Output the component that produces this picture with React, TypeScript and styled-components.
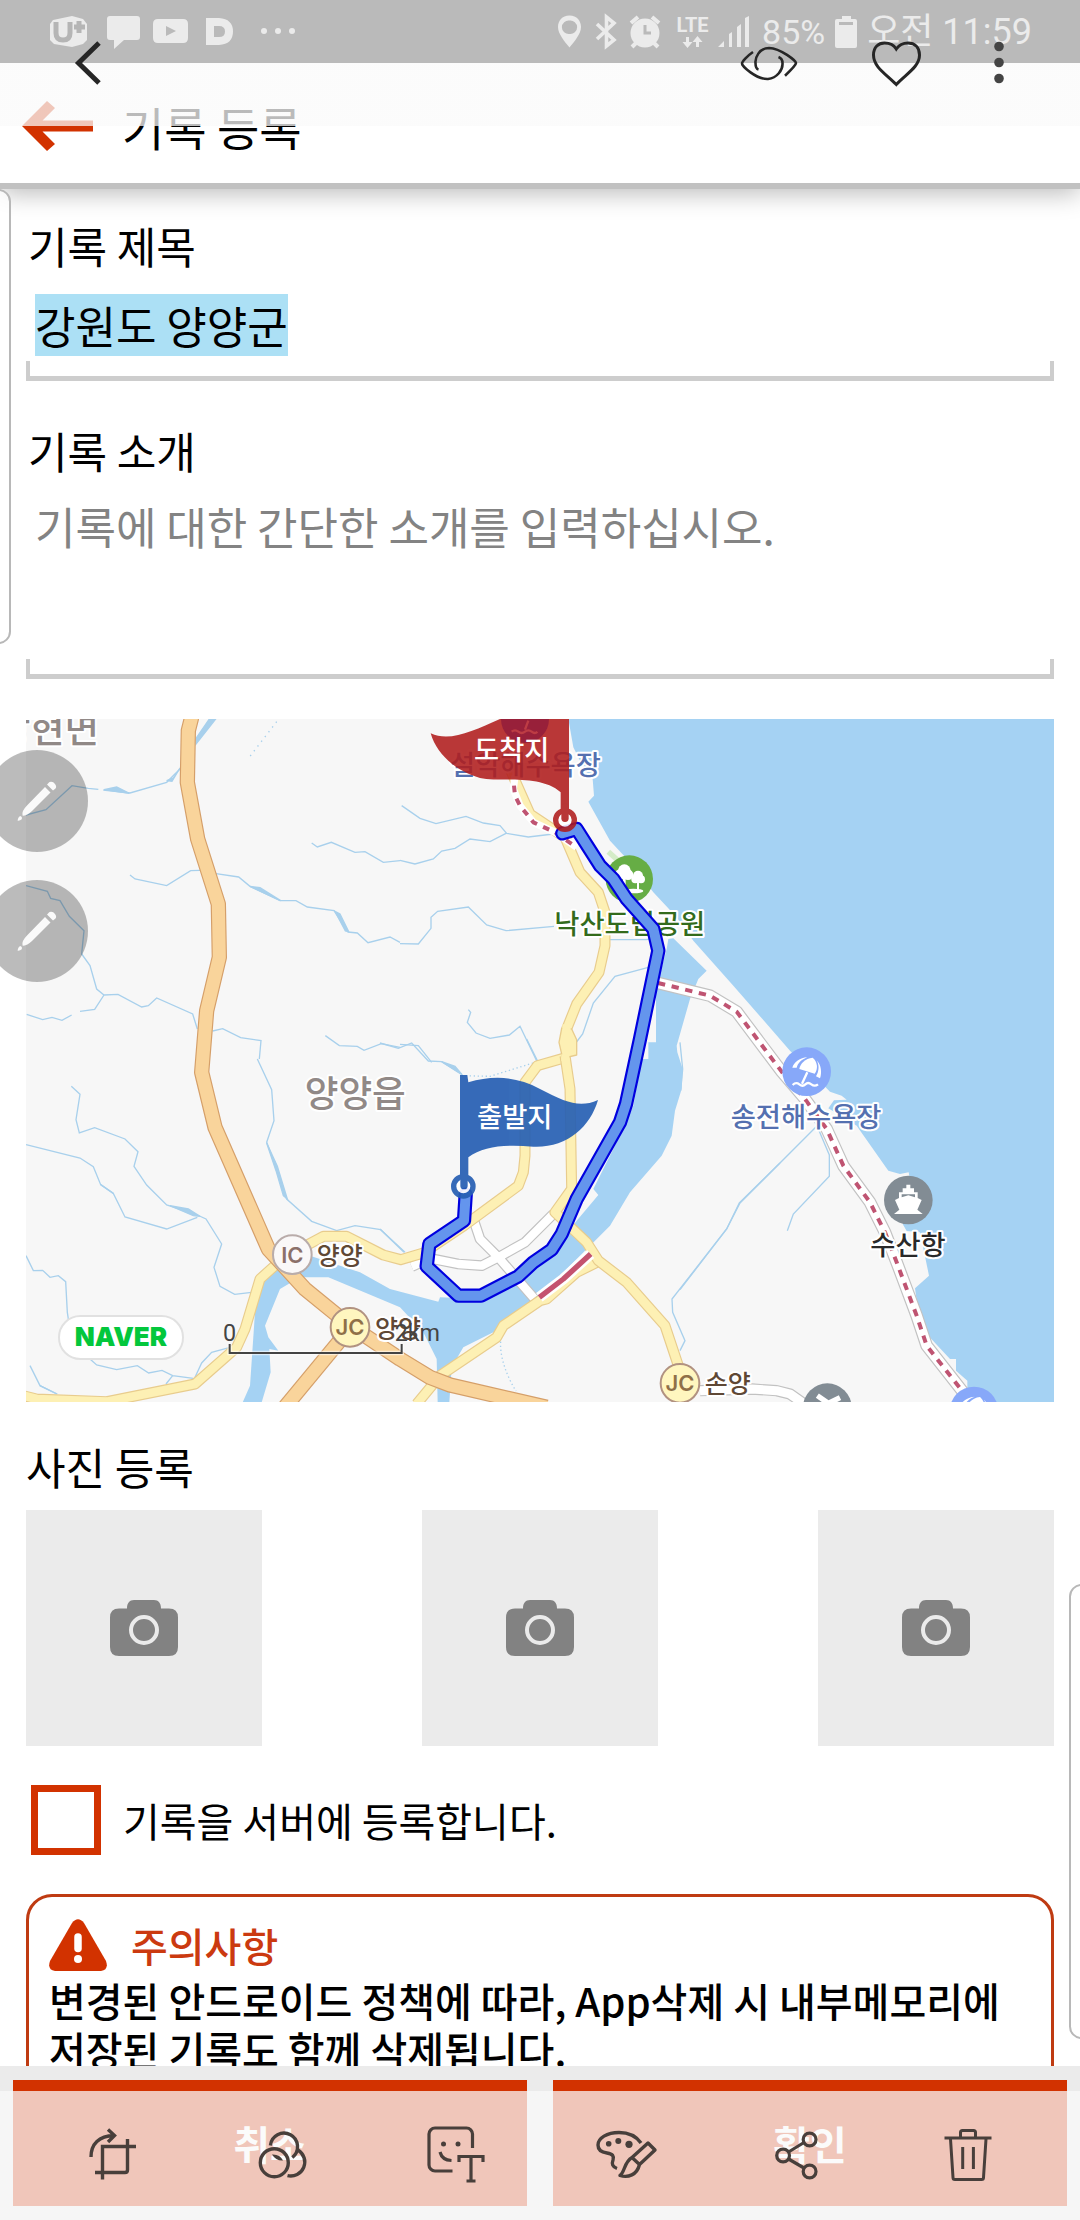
import React, { useEffect, useRef } from "react";
import styled, { createGlobalStyle } from "styled-components";

const accent = "#d23200";
const veil = "rgba(250, 250, 250, 0.745)";
const statusInk = "#ebebeb";
const sans = '"Noto Sans CJK KR", "Noto Sans", sans-serif';

const GlobalStyle = createGlobalStyle`
  *, *::before, *::after { box-sizing: border-box; }
  body { margin: 0; background: #fff; font-family: ${sans}; color: #000; }
  button, input, textarea { font: inherit; color: inherit; }
`;

const Screen = styled.div`
  position: relative;
  display: flex;
  flex-direction: column;
  height: 100vh;
  overflow: hidden;
`;

/* ---------- status bar ---------- */

const StatusBar = styled.header`
  position: relative;
  z-index: 2;
  flex: none;
  display: flex;
  align-items: center;
  justify-content: space-between;
  height: 63px;
  padding: 0 48px;
  background: #bababa;
  color: ${statusInk};
`;

const StatusGroup = styled.div`
  display: flex;
  align-items: center;
  gap: 10px;
`;

const StatusText = styled.span<{ $size: number }>`
  font-family: Roboto, ${sans};
  font-size: ${(p) => p.$size}px;
  line-height: 40px;
  white-space: nowrap;
`;

const Glyph = styled.svg`
  display: block;
  flex: none;
`;

/* ---------- app bar ---------- */

const AppBar = styled.div`
  position: relative;
  z-index: 1;
  flex: none;
  display: flex;
  align-items: center;
  gap: 28px;
  height: 126px;
  padding: 6px 22px 0;
  background: #fff;
  border-bottom: 6px solid #c1c1c1;
  box-shadow: 0 4px 24px rgba(0, 0, 0, 0.28);
`;

const IconButton = styled.button<{ $width: number }>`
  display: flex;
  align-items: center;
  justify-content: center;
  flex: none;
  width: ${(p) => p.$width}px;
  height: 64px;
  padding: 0;
  border: 0;
  background: none;
`;

const Title = styled.h1`
  margin: 0;
  font-size: 46px;
  line-height: 64px;
  font-weight: 400;
`;

/* ---------- form ---------- */

const Form = styled.main`
  flex: 1;
  min-height: 0;
  display: flex;
  flex-direction: column;
  padding: 24px 26px 0;
  overflow: hidden;
  & > * { flex: none; }
`;

const Label = styled.label`
  display: block;
  padding-left: 2px;
  font-size: 43px;
  line-height: 64px;
`;

const SectionTitle = styled.h2`
  margin: 32px 0 12px;
  font-size: 43px;
  line-height: 64px;
  font-weight: 400;
`;

const Field = styled.div`
  display: flex;
  flex-direction: column;
  margin: 17px 0 37px;
  padding-bottom: 5px;
  background:
    linear-gradient(#cdcdcd, #cdcdcd) left bottom / 100% 5px no-repeat,
    linear-gradient(#cdcdcd, #cdcdcd) left bottom / 4px 20px no-repeat,
    linear-gradient(#cdcdcd, #cdcdcd) right bottom / 4px 20px no-repeat;
`;

const TextInput = styled.input`
  width: 100%;
  height: 62px;
  margin-bottom: 20px;
  padding: 0 9px;
  border: 0;
  outline: 0;
  background: none;
  font-size: 44px;
  line-height: 62px;
  &::selection { background: #ace0f5; color: #000; }
`;

const TextArea = styled.textarea`
  width: 100%;
  height: 180px;
  padding: 0 9px;
  border: 0;
  outline: 0;
  resize: none;
  background: none;
  font-size: 44px;
  line-height: 64px;
  &::placeholder { color: #838383; opacity: 1; }
`;

const IntroField = styled(Field)`
  margin: 12px 0 40px;
`;

const MapFrame = styled.figure`
  margin: 0;
  svg { display: block; width: 100%; height: auto; }
`;

const PhotoRow = styled.div`
  display: flex;
  justify-content: space-between;
`;

const PhotoButton = styled.button`
  display: flex;
  align-items: center;
  justify-content: center;
  width: 236px;
  height: 236px;
  padding: 0;
  border: 0;
  background: #ebebeb;
`;

const CheckRow = styled.label`
  display: flex;
  align-items: center;
  gap: 22px;
  margin: 39px 0;
  padding-left: 5px;
  font-size: 40px;
  line-height: 58px;
`;

const CheckBox = styled.input`
  appearance: none;
  width: 70px;
  height: 70px;
  margin: 0;
  border: 7px solid ${accent};
  background: #fff;
  &:checked { background: ${accent}; }
`;

const Notice = styled.section`
  padding: 17px 20px 32px;
  border: 3px solid #bf3b12;
  border-radius: 26px;
  font-size: 40px;
  font-weight: 500;
`;

const NoticeHead = styled.h2`
  display: flex;
  align-items: center;
  gap: 24px;
  margin: 0;
  color: #cb3a10;
  font-size: 40px;
  line-height: 62px;
  font-weight: 500;
`;

const NoticeText = styled.p`
  margin: 0;
  line-height: 49px;
`;

const ActionBar = styled.footer`
  flex: none;
  display: flex;
  gap: 26px;
  padding: 14px 13px;
  background: #ebebeb;
`;

const ActionButton = styled.button`
  flex: 1;
  height: 126px;
  padding: 0;
  border: 0;
  background: ${accent};
  color: #fff;
  font-size: 40px;
  font-weight: 700;
`;

/* ---------- gallery viewer controls lying over the page ---------- */

const ViewerHeader = styled.nav`
  position: absolute;
  z-index: 3;
  inset: 0 0 auto 0;
  display: flex;
  align-items: center;
  height: 126px;
  padding: 0 42px 0 56px;
  background: linear-gradient(transparent 50%, ${veil} 50%);
`;

const Spacer = styled.span`
  flex: 1;
`;

const ViewerTools = styled.nav`
  position: absolute;
  z-index: 3;
  inset: auto 0 0 0;
  display: grid;
  grid-template-columns: repeat(6, 1fr);
  justify-items: center;
  align-items: center;
  height: 129px;
  padding: 0 27px;
  background: ${veil};
`;

const EdgeHandle = styled.div<{ $side: "left" | "right"; $top: number; $height: number }>`
  position: absolute;
  z-index: 4;
  ${(p) => p.$side}: -14px;
  top: ${(p) => p.$top}px;
  width: 25px;
  height: ${(p) => p.$height}px;
  border: 2px solid #b8b8b8;
  border-radius: 14px;
  background: rgba(255, 255, 255, 0.7);
`;

const PenBubble = styled.button<{ $top: number }>`
  position: absolute;
  z-index: 4;
  left: -14px;
  top: ${(p) => p.$top}px;
  width: 102px;
  height: 102px;
  padding: 0;
  border: 0;
  border-radius: 50%;
  background: rgba(0, 0, 0, 0.265);
`;

/* ---------- icons ---------- */

function Line({ children, width = 3, color = "#483f3b" }: { children: React.ReactNode; width?: number; color?: string }) {
  return (
    <Glyph width="64" height="64" viewBox="0 0 64 64" fill="none" stroke={color} strokeWidth={width} aria-hidden="true">
      {children}
    </Glyph>
  );
}

const CropIcon = () => (
  <Line width={3.4}>
    <path d="M10 33C10 20 18 11.800 33 11.500M27 5.500L33.500 11.500L27 18M21.500 55.500V22.500H55M14 48.500H44Q46.500 48.500 46.500 46V15" />
  </Line>
);
const FilterIcon = () => (
  <Line width={3.4}>
    <circle cx="22.300" cy="38.700" r="14" />
    <path d="M18.400 21.500A13.600 13.600 0 1 1 40.300 33.500M46 26A14 14 0 0 1 35.500 51.600" />
    <path d="M20 30.500Q28 30 31 36.500Q24 37 20 30.500Z" fill="#483f3b" stroke="none" />
  </Line>
);
const StickerIcon = () => (
  <Line width={3.2}>
    <path d="M49.500 24V10a6 6 0 0 0-6-6H12a6 6 0 0 0-6 6V41a6 6 0 0 0 6 6H29.500M17 28Q19 36 28.500 36.500M36 38V32.500H60V38M48 33V57M43.500 57H52.500" />
    <g fill="#483f3b" stroke="none"><circle cx="20.500" cy="20" r="2.500" /><circle cx="35" cy="20" r="2.500" /></g>
  </Line>
);
const PaletteIcon = () => (
  <Line width={3.4}>
    <path d="M47 19C42 12 34 8.500 25 8.500C13 8.500 4 14 4 21C4 27 9 28.500 13 29C19 30 20 32 19 36C17.500 40 18.500 43 23 44.500" />
    <path d="M54 19L61 26L45.500 40.500L38 33.500ZM38 33.500C30 38 31 48 26 51.500C34 54 43 51 45.500 40.500" strokeLinejoin="round" />
    <g fill="#483f3b" stroke="none"><circle cx="14.700" cy="19.700" r="2.800" /><circle cx="24.300" cy="17" r="3" /><circle cx="35" cy="20.300" r="3.600" /></g>
  </Line>
);
const ShareIcon = () => (
  <Line width={3.2}>
    <circle cx="44.600" cy="15.500" r="6.400" /><circle cx="18.100" cy="31.500" r="6.400" /><circle cx="44.600" cy="47.500" r="6.400" />
    <path d="M23.500 28L39 18.500M23.500 35L39 44" />
  </Line>
);
const TrashIcon = () => (
  <Line width={3}>
    <path d="M8.500 14H55.500M24.500 13V8.500Q24.500 6.500 26.500 6.500H37.500Q39.500 6.500 39.500 8.500V13M14.500 15L17 53.500Q17 55.500 19 55.500H45.500Q47.500 55.500 47.500 53.500L50 15M26.700 23V45M37.400 23V45" />
  </Line>
);
const EyeIcon = () => (
  <Line color="#262626" width={2.6}>
    <path d="M16 21C10 25 5 31 5 32.500C5 35 19 48.500 31 48C40 47 46 39 45.500 32C45.500 29 44 27 41.500 26M48 44.700C54 39 59 34 59 32C59 30 44 17.500 32 17C22 17 18 27 18.500 32C18.500 36 19.500 38 21.500 38.500" />
  </Line>
);
const HeartIcon = () => (
  <Line color="#262626" width={3}>
    <path d="M32.300 53.500C22 43 9.500 36 9.500 24C9.500 16 14.500 12 20.500 12C26 12 30 14 32.300 18C35 14 39 12 44 12C50.500 12 55.500 16 55.500 24C55.500 36 42 43 32.300 53.500Z" />
  </Line>
);
const MoreIcon = () => (
  <Line color="none">
    <g fill="#444"><circle cx="32" cy="15.500" r="4.800" /><circle cx="32" cy="31.500" r="4.800" /><circle cx="32" cy="47.500" r="4.800" /></g>
  </Line>
);
const CameraIcon = () => (
  <Glyph width="68" height="56" viewBox="0 0 68 56" aria-hidden="true">
    <path d="M9 8.500H17C17 3 19.500 0 24 0H44C48.500 0 51 3 51 8.500H59Q68 8.500 68 17.500V47Q68 56 59 56H9Q0 56 0 47V17.500Q0 8.500 9 8.500Z" fill="#828282" />
    <circle cx="34" cy="30" r="13" fill="none" stroke="#ebebeb" strokeWidth="4" />
  </Glyph>
);
const WarningIcon = () => (
  <Glyph width="58" height="52" viewBox="1 0 58 52" aria-hidden="true">
    <path d="M24 4Q30-3.500 36 4L58 42Q61 51 53 52H7Q-1 51 2 42Z" fill={accent} />
    <path d="M30 18V29.500" stroke="#fff" strokeWidth="7.500" strokeLinecap="round" />
    <circle cx="30" cy="40" r="4" fill="#fff" />
  </Glyph>
);
const PenIcon = () => (
  <Glyph width="102" height="102" viewBox="0 0 102 102" fill="#fafafa" aria-hidden="true">
    <path d="M59 37L64.500 42.500L46 61Q40 66.500 36.500 65.500Q35.500 61 41 55.500Z" />
    <path d="M61 34.500L63.500 32Q67 31 69 34Q71 36.500 69.500 38.500L67 40.500Z" />
    <path d="M34 66Q37 67 35.500 69.500Q33.500 71 31.500 70.500Q32 67 34 66Z" />
  </Glyph>
);

/* ---------- map: drawn in thirds of a pixel, tile by tile ---------- */

const tiles = {
  nw: "translate(0 2100)",
  n: "translate(1200 2100)",
  sw: "translate(0 3180)",
  s: "translate(1140 3120)",
  e: "translate(2040 2700)",
};

function Road({ d, color, edge, width }: { d: string; color: string; edge: string; width: number }) {
  return (
    <>
      <path d={d} stroke={edge} strokeWidth={width} />
      <path d={d} stroke={color} strokeWidth={width - 7} />
    </>
  );
}

const MapText = styled.text<{ $size: number; $fill: string; $halo?: string }>`
  font-family: ${sans};
  font-size: ${(p) => p.$size}px;
  font-weight: 500;
  fill: ${(p) => p.$fill};
  stroke: ${(p) => p.$halo || "#fff"};
  stroke-width: 12px;
  stroke-linejoin: round;
  paint-order: stroke;
`;

const MapLatin = styled.text<{ $size: number; $weight: number; $fill: string }>`
  font-family: ${(p) => (p.$weight > 400 ? "Inter" : "Roboto")}, sans-serif;
  font-size: ${(p) => p.$size}px;
  font-weight: ${(p) => p.$weight};
  fill: ${(p) => p.$fill};
`;

function Umbrella({ x, y }: { x: number; y: number }) {
  return (
    <g transform={`translate(${x} ${y})`}>
      <circle r="73" fill="#87a8f9" />
      <g fill="#fff">
        <path d="M18-42C34-28 34-8 24 6L-22-8C-20-24-4-40 18-42Z" />
        <path d="M2-43C-20-42-38-28-43-12L-30-12C-26-26-16-36 2-43Z" />
        <path d="M30-34C44-20 46 4 40 20L28 14C38-2 38-20 30-34Z" />
      </g>
      <path d="M2 2L-14 36M-42 40Q-32 30-22 38T-4 38T14 38T34 38" fill="none" stroke="#fff" strokeWidth="7" />
    </g>
  );
}

function Junction({ x, y, text, light }: { x: number; y: number; text: string; light?: boolean }) {
  return (
    <g transform={`translate(${x} ${y})`}>
      <circle r="58" fill={light ? "#faf8f8" : "#fff6bf"} stroke={light ? "#b9acaa" : "#b19281"} strokeWidth="6" />
      <MapLatin $size={66} $weight={600} $fill={light ? "#8b7069" : "#8f7048"} textAnchor="middle" y="24">{text}</MapLatin>
    </g>
  );
}

const expressway =
  "M575-1025L565-985L562-830L593-660L655-465L658-305L620-145L605 40L645 205L805 570L915 690L1050 800L1200 900L1290 955L1350 978L1640 1045";
const coastRoad =
  "M-66 252L90 290L170 338L305 518L375 600L440 690L490 800L570 910L615 1000L650 1090L710 1250L740 1340L850 1480";
const track =
  "M257 467L252 545L148 615L140 682L235 770L303 770L415 712L460 670L515 632L545 585L590 480L720 250L738 195L780 0L835-265L820-330L740-420L700-480L660-520L625-575L590-630L547-617";

function RouteMap() {
  const yellow = { color: "#fdf0b4", edge: "#e8cc8d" };
  const white = { color: "#fff", edge: "#c2c2c2" };
  return (
    <svg viewBox="78 2160 3084 2049" role="img" aria-label="양양군 이동 경로 지도">
      <rect x="78" y="2160" width="3084" height="2049" fill="#f7f7f7" />

      <g fill="none" stroke="#a8d0ec" strokeWidth="4">
        <g transform={tiles.nw}>
          <path d="M78 348L138 332L216 260L265 268L295 271M310 273L390 282L500 250L540 210M390 528L405 540L500 560L572 515L600 514M648 524L716 534L750 562L840 605L888 605L922 624L1002 635L1044 699L1072 702L1104 731L1170 714L1200 730M935 432L952 444L994 430L1065 460L1095 458L1150 490L1200 485M78 560L142 577L152 598L180 605L208 652L252 695L245 765L270 800L290 870L312 888L354 886L425 924L445 920L470 897L578 945L592 990M312 888L284 931L240 937M215 948L186 964L156 955L128 962L80 946M638 996L668 989L722 1016L783 1025L778 1080M976 1010L1018 1040L1072 1042L1092 1054L1144 1034L1200 1045" />
          <path d="M830 68L750 172" strokeDasharray="4 14" />
          <path d="M655 50L588 135L588 118L628 60ZM500 245L520 237L540 207L516 247ZM312 272L350 264L388 283ZM750 562L780 566L842 605ZM1005 637L1020 645L1046 698L1036 696Z" fill="#a8d0ec" />
        </g>
        <g transform={tiles.n}>
          <path d="M5 320L60 358L108 374L198 352L250 372L300 380L320 403L385 414L460 405M0 484L45 495L100 480L125 456L165 448L210 420L270 428L318 403M0 734L55 735L93 688L93 655L113 637L205 624L260 678L318 695L462 682M630 722L740 722L805 705M745 805L645 832L580 912L548 1005L525 1035M205 932L212 940L202 970L228 1002L270 1018L328 1008L360 982L412 1090M0 1036L55 1040L95 1090" />
          <path d="M625 458L655 485" stroke="#d4ecc8" strokeWidth="16" />
        </g>
        <g transform={tiles.sw}>
          <path d="M772 0L815 92L822 185L800 250L830 330L860 420L935 487L1010 515L1065 500L1142 512L1215 580M214 82L240 106L228 182L238 222L284 206L375 240L414 278L402 322L440 378L500 438L585 465L618 480L665 555L642 625L660 682L704 706L755 700M78 257L240 297L280 323L302 377L340 403L375 474L500 510L592 475M78 590L100 635L128 634L150 655L175 650L197 668L202 760L208 800L270 900L290 918L350 932L412 920L446 942L486 934L518 950L580 958M518 950L498 975M90 920L120 980L170 1005M585 955L605 912L635 880L690 865" />
          <path d="M800 252L832 322L862 420L850 410L828 335ZM510 440L565 450L600 472L580 470ZM302 377L340 403ZM120 980L172 1005Z" fill="#a8d0ec" />
        </g>
        <g transform={tiles.s}>
          <path d="M0 12L55 28L95 12L145 66L185 68L245 105M440 0L472 65M1200 372L1078 492L1040 570L876 780L878 820L915 905L900 935M0 570L72 640" />
          <path d="M245 110L330 112L472 68M368 885C350 920 372 1000 408 1056" strokeDasharray="4 8" />
          <path d="M185 68L225 82L247 108Z" fill="#a8d0ec" />
        </g>
        <g transform={tiles.e}>
          <path d="M410 682L180 912L140 990L0 1172M415 690L448 768L448 832L340 945L322 995M0 430L8 510L2 575" />
        </g>
      </g>

      <g fill="#a5d2f3">
        <path transform={tiles.e} d="M1122-540H-335L-320-455L-285-385L-262-360L-258-310L-275-292L-210-175L-150-110L-80-20L-10 55L40 125L160 260L330 455L450 578L485 590L500 602L462 604L445 628L530 680L625 815L660 825L686 820L700 900L668 975L680 996L720 1000L747 1130L705 1168L715 1240L745 1310L810 1380H828V1415L862 1445V1510H1122Z" />
        <path transform={tiles.s} d="M865-300L880-302L980-205L955-180L930-120L890 20L892 40L908 90L905 150L885 215L875 290L845 350L750 460L690 560L630 620L475 775L380 850L340 880L250 925L215 985L208 1090H173L170 960L130 880L60 805L-155 715H-240L-300 750L-345 860L-335 895L-305 935L-332 930L-328 1000L-355 1090H-412L-390 1040L-375 820L-350 720L-290 660L-210 650L-60 700L30 750L175 788L180 775L300 780L420 720L520 640L590 545L655 468L640 450L700 330L760 200L785 60H805V10H828V-150L860-270Z" />
      </g>

      <g fill="none" strokeLinejoin="round">
        <g transform={tiles.s}>
          <Road d="M95 683L150 658L235 675L305 680L355 655L435 610L520 525M280 540L300 600L355 655L462 778" width={32} {...white} />
          <Road d="M-1070 1070L-1030 1080L-820 1088L-555 1035L-430 925L-405 870L-360 720L-310 675L-250 635L-170 592H-100L10 648L62 662L130 642L252 560L415 440L430 400L435 350V130L472 80L560 55" width={33} {...yellow} />
          <Road d="M110 1095L180 1010L350 895L370 860L480 785L500 780L590 700L655 668" width={33} {...yellow} />
          <Road d="M390-810L450-675L555-605L600-500L655-440L675-380V-280L657-200L590-105L560-30L565 50" width={33} {...yellow} />
          <Road d="M555 50L570 150L575 450L525 520L620 610L655 665L740 730L855 860L895 980" width={33} {...yellow} />
          <path d="M545-32L575-30L590 2V48L548 58L537 10Z" fill="#fdf0b4" stroke="#e8cc8d" strokeWidth="4" />
          <path d="M547-44H572V-20H547ZM544 46H568V66H544Z" fill="#fdf0b4" />
          <path d="M478 775L550 720L632 645" stroke="#fff" strokeWidth="32" />
          <path d="M478 775L550 720L632 645" stroke="#c4536f" strokeWidth="16" />
        </g>
        <g transform={tiles.sw}>
          <Road d="M1040 820L850 1050" width={46} color="#f9d49b" edge="#d59f69" />
          <Road d={expressway} width={46} color="#f9d49b" edge="#d59f69" />
        </g>
        <g transform={tiles.n}>
          <path d="M345 230L340 270L360 320L400 370L465 400L530 445" stroke="#fff" strokeWidth="22" />
          <path d="M342 260L345 290L360 320L400 370L465 400L530 445" stroke="#bf5472" strokeWidth="12" strokeDasharray="20 20" />
        </g>
        <g transform={tiles.e}>
          <Road d={coastRoad} width={38} {...white} />
          <path d={coastRoad} stroke="#bf5472" strokeWidth="12" strokeDasharray="22 20" />
          <Road d="M60 1475L215 1470L290 1475L330 1485L380 1520" width={34} {...white} />
        </g>
      </g>

      <g transform={tiles.nw}>
        <MapText $size={112} $fill="#918987" x="-12" y="132">강현면</MapText>
      </g>
      <g transform={tiles.n}>
        <circle cx="688" cy="540" r="71" fill="#66ad45" />
        <g fill="#fff">
          <circle cx="673" cy="515" r="19" /><circle cx="661" cy="526" r="16" /><circle cx="684" cy="527" r="16" />
          <circle cx="714" cy="530" r="15" /><circle cx="706" cy="541" r="12" /><circle cx="723" cy="541" r="12" />
          <path d="M669 535H677V580H669ZM711 545H717V575H711Z" />
          <ellipse cx="700" cy="576" rx="30" ry="7" />
        </g>
        <MapText $size={82} $fill="#336b1c" x="463" y="704">낙산도립공원</MapText>
        <MapText $size={82} $fill="#5470b0" x="150" y="228">설악해수욕장</MapText>
      </g>
      <g transform={tiles.sw}>
        <MapText $size={110} $fill="#918987" x="914" y="144">양양읍</MapText>
        <Junction x={877} y={587} text="IC" light />
        <MapText $size={75} $fill="#5f4835" x="950" y="617">양양</MapText>
        <Junction x={1050} y={805} text="JC" />
        <MapText $size={75} $fill="#5f4835" x="1125" y="837">양양</MapText>
        <rect x="177" y="771" width="372" height="129" rx="64" fill="#fff" stroke="#e1e1e1" strokeWidth="6" />
        <MapLatin $size={78} $weight={900} $fill="#03c73c" x="363" y="862" textAnchor="middle">NAVER</MapLatin>
        <path d="M689 855V882H1205V855" fill="none" stroke="#fff" strokeOpacity="0.6" strokeWidth="14" />
        <path d="M689 855V882H1205V855" fill="none" stroke="#444" strokeWidth="6" />
        <MapLatin $size={70} $weight={400} $fill="#444" x="689" y="845" textAnchor="middle">0</MapLatin>
        <MapLatin $size={70} $weight={400} $fill="#444" x="1184" y="845">2km</MapLatin>
      </g>
      <g transform={tiles.s}>
        <Junction x={900} y={1033} text="JC" />
        <MapText $size={75} $fill="#5f4835" x="974" y="1063">손양</MapText>
      </g>
      <g transform={tiles.e}>
        <Umbrella x={380} y={518} />
        <MapText $size={82} $fill="#5470b0" x="152" y="684">송전해수욕장</MapText>
        <circle cx="685" cy="903" r="73" fill="#828c94" />
        <path d="M679 857H691V868H702V880H713V897L725 903L712 932L728 945H642L658 932L645 903L657 897V880H668V868H679ZM665 895L685 889L705 895V886H665Z" fill="#fff" fillRule="evenodd" />
        <MapText $size={82} $fill="#292929" x="571" y="1069">수산항</MapText>
        <circle cx="442" cy="1526" r="73" fill="#828c94" />
        <path d="M412 1490L470 1530M480 1496L420 1525" stroke="#fff" strokeWidth="16" />
        <Umbrella x={882} y={1536} />
      </g>

      <g transform={tiles.s}>
        <path d={track} fill="none" stroke="#0000df" strokeWidth="43" strokeLinejoin="round" strokeLinecap="round" />
        <path d={track} fill="none" stroke="#6495ed" strokeWidth="30" strokeLinejoin="round" strokeLinecap="round" />
        <g opacity="0.92">
          <path d="M240 108H262L265 130C340 108 410 112 480 150C560 192 600 207 654 183C630 265 560 327 460 323C380 316 310 320 265 355V420H240Z" fill="#265fb3" />
          <circle cx="250" cy="442" r="29" fill="#fff" stroke="#265fb3" strokeWidth="16" />
          <path d="M252 400V440" stroke="#265fb3" strokeWidth="22" strokeLinecap="round" />
        </g>
        <MapText $size={82} $fill="#fff" $halo="none" x="291" y="263">출발지</MapText>
      </g>
      <g transform={tiles.n}>
        <g opacity="0.88">
          <path d="M300 60C220 95 150 130 92 103C110 165 165 215 240 237C300 250 420 225 482 280V340H507V60Z" fill="#b01c1c" />
          <circle cx="495" cy="363" r="28" fill="#fff" stroke="#b01c1c" strokeWidth="16" />
          <path d="M495 325V358" stroke="#b01c1c" strokeWidth="22" strokeLinecap="round" />
        </g>
        <path d="M303 60H447A72 72 0 0 1 303 60Z" fill="#98203a" />
        <path d="M335 98Q345 90 355 98T375 98T395 98T412 98M385 65L375 92" fill="none" stroke="#bd3c44" strokeWidth="7" />
        <MapText $size={82} $fill="#fff" $halo="none" x="222" y="182">도착지</MapText>
      </g>
    </svg>
  );
}

/* ---------- page ---------- */

const tools: [string, () => React.ReactElement][] = [
  ["자르기", CropIcon],
  ["필터", FilterIcon],
  ["스티커", StickerIcon],
  ["그리기", PaletteIcon],
  ["공유", ShareIcon],
  ["삭제", TrashIcon],
];

export default function App() {
  const titleRef = useRef<HTMLInputElement>(null);
  useEffect(() => {
    titleRef.current?.focus();
    titleRef.current?.select();
  }, []);

  return (
    <>
      <GlobalStyle />
      <Screen>
        <StatusBar>
          <Glyph width="248" height="40" viewBox="48 12 248 40" fill={statusInk} aria-hidden="true">
            <path d="M53 20L72 16L83 19L87 24V40L83 44L72 47L54 44L50 40V24Z" />
            <path d="M56 22V33Q56 40 63 40Q70 40 70 33V22M79 21V33M74 27H85" fill="none" stroke="#b5b5b5" strokeWidth="5" />
            <path d="M110 16H137Q140 16 140 19V37Q140 40 137 40H124L114 49V40H110Q107 40 107 37V19Q107 16 110 16Z" />
            <path fillRule="evenodd" d="M158 19H183Q188 19 188 24V38Q188 43 183 43H158Q153 43 153 38V24Q153 19 158 19ZM166 26V36L176 31Z" />
            <path fillRule="evenodd" d="M206 18H219Q233 19 233 31.500Q233 44 219 45H206ZM214 26V37H219Q225 37 225 31.500Q225 26 219 26Z" />
            <circle cx="264" cy="31" r="3" /><circle cx="278" cy="31" r="3" /><circle cx="292" cy="31" r="3" />
          </Glyph>
          <StatusGroup>
            <Glyph width="196" height="40" viewBox="557 12 196 40" fill={statusInk} role="img" aria-label="LTE">
              <path fillRule="evenodd" d="M570.500 15.500C578 15.500 582 21 582 27C582 34 575 42 570.500 47.500C566 42 559 34 559 27C559 21 563 15.500 570.500 15.500ZM570.500 20.500A6.800 6.800 0 1 0 570.500 34A6.800 6.800 0 1 0 570.500 20.500Z" />
              <path d="M598 24L615 40L607.500 46V17L615 23L598 39" fill="none" stroke={statusInk} strokeWidth="3.600" />
              <circle cx="646" cy="33" r="14.500" />
              <path d="M632 23L639 17M653 17L660 23M637 43L633 47M655 43L659 47" stroke={statusInk} strokeWidth="4" />
              <path d="M646 25V33H652" fill="none" stroke="#bababa" strokeWidth="3" />
              <text x="693.500" y="32" fontSize="20" fontWeight="700" fontFamily="Roboto, sans-serif" textAnchor="middle">LTE</text>
              <path d="M688.500 48L683.500 42H687V37H690V42H693.500ZM698.500 36L693.500 42H697V47H700V42H703.500Z" />
              <path d="M719 47L725 41V47ZM730 34L733 32V47H730ZM738 27L742 24V47H738ZM746 18L750 16V47H746Z" />
            </Glyph>
            <StatusText $size={34}>85%</StatusText>
            <Glyph width="22" height="32" viewBox="0 0 22 32" fill={statusInk} aria-hidden="true">
              <path fillRule="evenodd" d="M7 0H16V3H20Q22 3 22 5V30Q22 32 20 32H2Q0 32 0 30V5Q0 3 2 3H7ZM4 6V9H18V6Z" />
            </Glyph>
            <StatusText $size={36}>오전 11:59</StatusText>
          </StatusGroup>
        </StatusBar>

        <AppBar>
          <IconButton $width={72} type="button" aria-label="뒤로">
            <Glyph width="72" height="52" viewBox="0 0 72 52" fill={accent} aria-hidden="true">
              <path d="M25 1L33 8L20.500 20.500H71V31.500H20.500L33 44L25 51L0 26Z" />
            </Glyph>
          </IconButton>
          <Title>기록 등록</Title>
        </AppBar>

        <Form>
          <Label htmlFor="record-title">기록 제목</Label>
          <Field>
            <TextInput id="record-title" ref={titleRef} defaultValue="강원도 양양군" />
          </Field>

          <Label htmlFor="record-intro">기록 소개</Label>
          <IntroField>
            <TextArea id="record-intro" placeholder="기록에 대한 간단한 소개를 입력하십시오." />
          </IntroField>

          <MapFrame>
            <RouteMap />
          </MapFrame>

          <SectionTitle>사진 등록</SectionTitle>
          <PhotoRow>
            {[1, 2, 3].map((n) => (
              <PhotoButton key={n} type="button" aria-label={`사진 ${n}`}>
                <CameraIcon />
              </PhotoButton>
            ))}
          </PhotoRow>

          <CheckRow>
            <CheckBox type="checkbox" />
            기록을 서버에 등록합니다.
          </CheckRow>

          <Notice>
            <NoticeHead>
              <WarningIcon />
              주의사항
            </NoticeHead>
            <NoticeText>
              변경된 안드로이드 정책에 따라, App삭제 시 내부메모리에 저장된 기록도 함께 삭제됩니다.
            </NoticeText>
          </Notice>
        </Form>

        <ActionBar>
          <ActionButton type="button">취소</ActionButton>
          <ActionButton type="button">확인</ActionButton>
        </ActionBar>

        <ViewerHeader>
          <IconButton $width={64} type="button" aria-label="닫기">
            <Line color="#262626" width={5}>
              <path d="M43 12L22.500 32L43 52" />
            </Line>
          </IconButton>
          <Spacer />
          <IconButton $width={127} type="button" aria-label="빅스비 비전"><EyeIcon /></IconButton>
          <IconButton $width={127} type="button" aria-label="즐겨찾기"><HeartIcon /></IconButton>
          <IconButton $width={79} type="button" aria-label="더보기"><MoreIcon /></IconButton>
        </ViewerHeader>

        <ViewerTools>
          {tools.map(([name, Icon]) => (
            <IconButton key={name} $width={64} type="button" aria-label={name}>
              <Icon />
            </IconButton>
          ))}
        </ViewerTools>

        <EdgeHandle $side="left" $top={189} $height={455} />
        <EdgeHandle $side="right" $top={1584} $height={455} />
        <PenBubble $top={750} type="button" aria-label="메모"><PenIcon /></PenBubble>
        <PenBubble $top={880} type="button" aria-label="펜"><PenIcon /></PenBubble>
      </Screen>
    </>
  );
}
